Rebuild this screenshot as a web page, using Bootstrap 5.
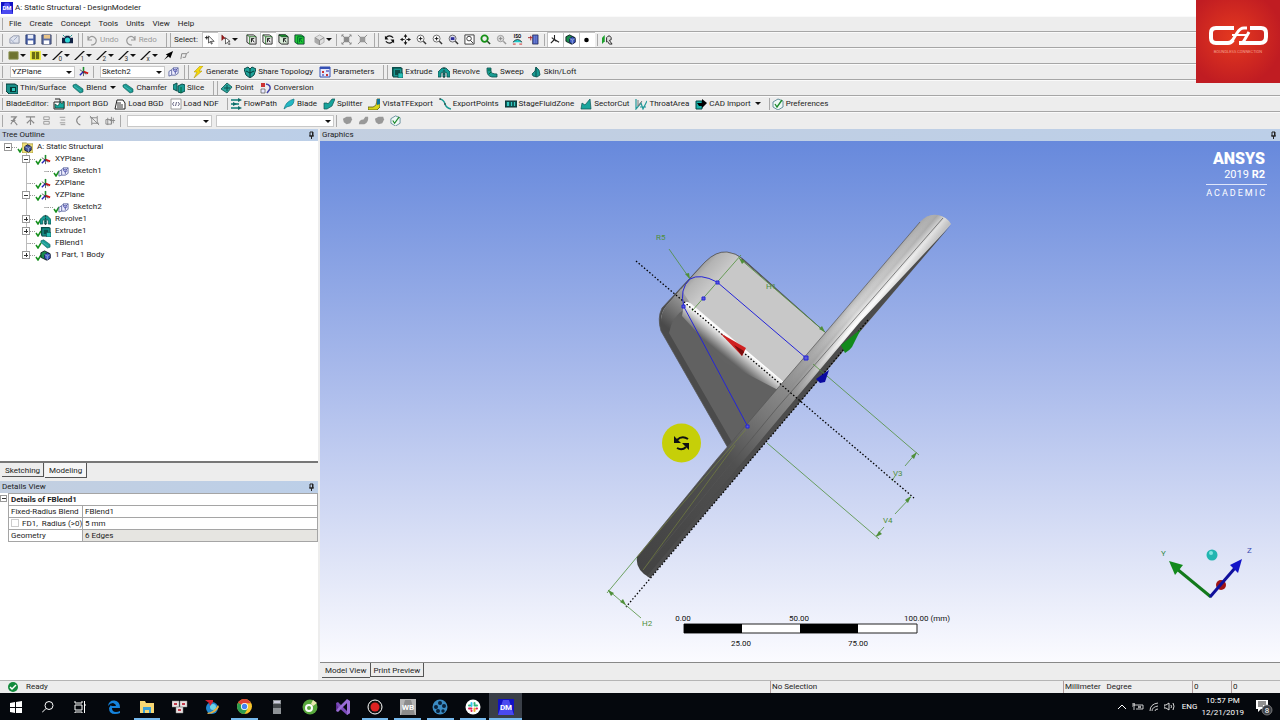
<!DOCTYPE html>
<html lang="en">
<head>
<meta charset="utf-8">
<meta name="viewport" content="width=device-width, initial-scale=1">
<title>A: Static Structural - DesignModeler</title>
<link href="https://cdn.jsdelivr.net/npm/bootstrap@5.3.0/dist/css/bootstrap.min.css" rel="stylesheet">
<style>
body{font:8px/12px Roboto,"Noto Sans",sans-serif;color:#1c1c1c;background:#ededed;overflow:hidden}
button{border:0;background:none;padding:0;color:inherit;font:inherit}
svg{display:block;flex:none}
.ic{width:12px;height:12px}
.titlebar{height:16px;background:#fff;padding-left:1px;gap:2px}
.menubar,.tools{height:16px;border-bottom:1px solid #a6a6a6;box-shadow:inset 0 1px #fafafa;white-space:nowrap}
.tools:last-child{border-bottom:0;height:17px}
.menubar a{color:inherit;text-decoration:none;margin-right:8px}
.menubar .items{padding-left:3px}
.grip{width:6px;height:12px;flex:none;border-left:2px solid transparent;box-shadow:inset 1px 0 #a9a9a9}
.split{width:11px;height:14px;flex:none;background:linear-gradient(#aaa,#aaa) 3px 0/1px 100% no-repeat,linear-gradient(#aaa,#aaa) 7px 0/1px 100% no-repeat}
.rule{width:5px;height:12px;flex:none;background:linear-gradient(#aaa,#aaa) 2px 0/1px 100% no-repeat}
.ib{width:16px;height:15px;flex:none;display:flex;align-items:center;justify-content:center}
.ib.on{background:#fff;box-shadow:inset 1px 1px #c4c4c4}
.ib.dd{width:22px;gap:1px}
.ib .ic{width:11px;height:11px}
.dd::after,.tb.dd::after{content:"";border:3px solid transparent;border-top:3px solid #111;border-bottom:0}
.tb{height:15px;display:flex;align-items:center;flex:none;margin-right:6px}
.tb .ic{margin-right:2px}
.tb.dd::after{margin-left:4px}
.off{color:#9a9a9a}
.combo{appearance:none;border:1px solid #c8c8c8;border-radius:0;height:12px;padding:0 0 0 1px;font:inherit;line-height:10px;color:inherit;background:#fff;outline:0}
.pick{position:relative;flex:none;display:flex}
.pick::after{content:"";position:absolute;right:3px;top:5px;border:3px solid transparent;border-top:3px solid #111;border-bottom:0;pointer-events:none}
.w-s{width:65px}.w-m{width:85px}.w-l{width:118px}
.brandbox{position:absolute;right:0;top:0;width:84px;height:83px;background:radial-gradient(circle at 45% 45%,#e5391f,#c01c22 75%);z-index:5}
.panehead{height:12px;background:linear-gradient(90deg,#c3cfe0,#bccfe8);padding:0 3px 0 2px;flex:none}
.leftpane{padding-right:2px}
.tree{flex:1 1 0;min-height:0;background:#fff;border-bottom:2px solid #777;position:relative;list-style:none;margin:0;padding:0}
.tree ul{list-style:none;margin:0;padding:0 0 0 18px}
.tree .twig{display:flex;align-items:center;height:12px;padding-left:4px;position:relative}
.twig .bx,.gut .bx{width:8px;height:8px;flex:none;border:1px solid #999;background:linear-gradient(#333,#333) 1px 50%/4px 1px no-repeat #fff}
.twig .plus{background:linear-gradient(#333,#333) 1px 50%/4px 1px no-repeat,linear-gradient(#333,#333) 50% 1px/1px 4px no-repeat #fff}
.twig .no{width:8px;height:8px;flex:none;background:linear-gradient(90deg,#bbb,#bbb) 4px 4px/4px 1px no-repeat}
.twig .dash{width:5px;border-top:1px dotted #999;flex:none}
.twig .ck{width:7px;height:8px;margin-top:4px}
.twig .ic{width:11px;height:11px;margin:0 2px 0 -2px}
.trunk{background:linear-gradient(#bbb,#bbb) 26px 0/1px calc(100% - 6px) no-repeat}
.tabs{height:18px;flex:none;gap:1px;padding-left:2px}
.tabs button{height:14px;padding:2px 3px 0;border:1px solid #555;border-width:0 1px 1px 0}
.tabs button.cur{height:15px;padding:2px 4px 0;background:#f6f6f6}
.details{background:#fff;flex:0 0 187px}
.gut{width:8px;flex:none;padding-top:2px}
.gut .bx{width:7px;height:7px}
.grid-t{width:100%;border-collapse:collapse;table-layout:fixed;border:1px solid #a5a5a5}
.grid-t td,.grid-t th{height:12px;line-height:11px;padding:0 2px;border:1px solid #a5a5a5;white-space:nowrap}
.grid-t col:first-child{width:74px}
.grid-t .ro{background:#e6e5e1}
.grid-t input{appearance:none;width:8px;height:8px;border:1px solid #ccc;margin:0 3px 0 0;vertical-align:-1px}
.workarea,.view3d{min-height:0}
.view3d{flex:1 1 0;background:linear-gradient(#6789dc,#a9baeb 45%,#dbe1f6 78%,#fbfbff)}
.logo3d{position:absolute;right:15px;top:8px;color:#fff;text-align:right}
.logo3d .big{font-weight:900;font-size:16px;line-height:20px;display:block}
.logo3d .yr{font-size:11px;line-height:11px;display:block}
.logo3d .yr b{font-weight:700}
.logo3d .ac{font-size:9px;line-height:14px;letter-spacing:2px;margin-right:-2px;border-top:1px solid #dfe6fa;margin-top:4px;padding-top:1px;display:block}
.triad{position:absolute;right:20px;bottom:60px}
.viewtabs{height:18px;flex:none;border-top:1px solid #888;padding-left:2px}
.viewtabs button{height:14px;padding:2px 3px 0;border:1px solid #555;border-width:0 1px 1px 1px}
.viewtabs button.cur{height:15px;padding-top:2px;border-left:0;border-right:0}
.statusbar{height:13px;flex:none;border-top:1px solid #b5b5b5}
.statusbar .cell{border-left:1px solid #b09a9a;padding-left:1px;line-height:11px;margin-right:1px}
.c1{flex:1 1 0}.c2{flex:0 0 292px}.c3{flex:0 0 128px}.c4{flex:0 0 38px}.c5{flex:0 0 48px}
.taskbar{height:27px;flex:none;background:#05080d;color:#fff}
.taskbar button{height:27px;display:flex;align-items:center;justify-content:center;position:relative}
.sysb{width:32px}
.apps{width:424px;margin-left:2px}
.apps button{flex:1 1 0}
.apps .run::after{content:"";position:absolute;left:3px;right:3px;bottom:0;height:2px;background:#76b9ed}
.apps .live{background:#3a3f48}
.apps .live::after{left:0;right:0}
.tray{width:16px}
</style>
</head>
<body class="d-flex flex-column vh-100">
<svg width="0" height="0" class="position-absolute" aria-hidden="true"><defs>
<symbol id="dm" viewBox="0 0 16 16"><path fill="#1111c4" d="M0 0h16v16H0z"/><path fill="#4a4af0" d="M0 16 5 1h6l5 15z"/><text x="8" y="11" font-size="8" font-weight="700" fill="#fff" text-anchor="middle">DM</text></symbol>
<symbol id="new" viewBox="0 0 12 12"><path d="M1 10V5l4-3h6v8z" fill="#dfe3ee" stroke="#8d95a8"/><path d="m5 7 4-4M2 6l4 4" stroke="#9aa7c4"/></symbol>
<symbol id="save" viewBox="0 0 12 12"><path d="M1 1h10v10H1z" fill="#4860a8" stroke="#2c3c70"/><path d="M3 1h6v4H3z" fill="#e8ecf6"/><path d="M3 7h6v4H3z" fill="#fff"/></symbol>
<symbol id="saveas" viewBox="0 0 12 12"><path d="M1 1h10v10H1z" fill="#5a6ba0" stroke="#3b4468"/><path d="M3 1h7v4H3z" fill="#e8c48a"/><path d="M3 7h6v4H3z" fill="#fff"/></symbol>
<symbol id="cam" viewBox="0 0 12 12"><path d="M0 4h3l1-2h4l1 2h3v6H0z" fill="#124" /><circle cx="6" cy="6.500" r="2.800" fill="#2fd6d6"/><path d="m1 1 2 2M11 1 9 3" stroke="#188"/></symbol>
<symbol id="undo" viewBox="0 0 12 12"><path d="M2 2v4h4M2 6q2-5 6-3 3 2 2 5t-5 3" fill="none" stroke="#9a9a9a" stroke-width="1.200"/></symbol>
<symbol id="redo" viewBox="0 0 12 12"><path d="M10 2v4H6M10 6Q8 1 4 3 1 5 2 8t5 3" fill="none" stroke="#9a9a9a" stroke-width="1.200"/></symbol>
<symbol id="cur" viewBox="0 0 12 12"><path d="M5 2v8l2-2 1 3 1-.5L8 8h3z" fill="#fff" stroke="#222" stroke-width=".8"/><path d="M1 4h4M3 2v4" stroke="#111"/></symbol>
<symbol id="cur2" viewBox="0 0 12 12"><path d="M2 1v6l2-2h2z" fill="#a31818" stroke="#611" stroke-width=".6"/><path d="M6 4v7l2-2 2 3 1-1-2-3h2z" fill="#fff" stroke="#333" stroke-width=".8"/></symbol>
<symbol id="bx" viewBox="0 0 12 12"><path d="M1 1h7l3 2v8H4L1 9z" fill="#eee" stroke="#222"/><path d="M1 1l3 2h7M4 3v8" fill="none" stroke="#2c7a2c"/><path d="m6 5 3 4M6 5v4M6 5h3" stroke="#111"/></symbol>
<symbol id="bxg" viewBox="0 0 12 12"><path d="M1 1h7l3 2v8H4L1 9z" fill="#d7ead7" stroke="#222"/><path d="M1 1h7l3 2H4z" fill="#19b82b" stroke="#142"/><path d="m6 5 3 4M6 5v4M6 5h3" stroke="#111"/></symbol>
<symbol id="bxf" viewBox="0 0 12 12"><path d="M1 1h7l3 2v8H4L1 9z" fill="#1dcb32" stroke="#143"/><path d="M4 3h7M4 3v8M6 5l3 4M6 5v4M6 5h3" stroke="#063" fill="none"/></symbol>
<symbol id="gcube" viewBox="0 0 12 12"><path d="m1 4 5-3 5 3v5l-5 3-5-3z" fill="#e0e0e0" stroke="#999" stroke-width=".7"/><path d="m1 4 5 3v5l-5-3z" fill="#aaa"/><path d="m1 4 5 3 5-3M6 7v5" fill="none" stroke="#888"/></symbol>
<symbol id="ext" viewBox="0 0 12 12"><path d="M3 3h6v6H3z" fill="#8d8d8d"/><path d="M1 3V1h2M9 1h2v2M11 9v2H9M3 11H1V9M1 1l10 10M11 1 1 11" fill="none" stroke="#888"/></symbol>
<symbol id="shr" viewBox="0 0 12 12"><path d="M3 3h6v6H3z" fill="#9a9a9a"/><path d="m1 1 3 3M11 1 8 4M1 11l3-3M11 11 8 8" stroke="#888"/></symbol>
<symbol id="rot" viewBox="0 0 12 12"><path d="M2 5q1-3 4-3 2 0 4 2M10 7q-1 3-4 3-2 0-4-2" fill="none" stroke="#111" stroke-width="1.300"/><path d="M1 2v4h4zM11 10V6H7z" fill="#111"/></symbol>
<symbol id="pan" viewBox="0 0 12 12"><path d="M6 2v8M2 6h8" stroke="#111" stroke-dasharray="3 2"/><path d="m6 0 2 3H4zM6 12l2-3H4zM0 6l3-2v4zM12 6 9 4v4z" fill="#111"/></symbol>
<symbol id="mag" viewBox="0 0 12 12"><circle cx="5" cy="5" r="3.800" fill="#fff" stroke="#555" stroke-width=".9"/><path d="m8 8 3 3" stroke="#333" stroke-width="1.500"/><path d="M5 3v4M3 5h4" stroke="#111"/></symbol>
<symbol id="magb" viewBox="0 0 12 12"><circle cx="5" cy="5" r="3.800" fill="#dde" stroke="#555" stroke-width=".9"/><path d="m8 8 3 3" stroke="#333" stroke-width="1.500"/><path fill="#2a2a98" d="M3 3.500h4v3H3z"/></symbol>
<symbol id="magx" viewBox="0 0 12 12"><path d="M1 1h10v10H1z" fill="#fff" stroke="#333"/><circle cx="5.500" cy="5" r="2.500" fill="none" stroke="#333"/><path d="m7 7 3 3" stroke="#333"/></symbol>
<symbol id="magg" viewBox="0 0 12 12"><circle cx="5" cy="5" r="3.500" fill="#eee" stroke="#159015" stroke-width="2"/><path d="m8 8 3 3" stroke="#242" stroke-width="1.600"/></symbol>
<symbol id="mago" viewBox="0 0 12 12"><circle cx="5" cy="5" r="3.500" fill="#ddd" stroke="#999"/><path d="m8 8 3 3" stroke="#999" stroke-width="1.500"/><path d="M5 3v4M3 5h4" stroke="#888"/></symbol>
<symbol id="iso" viewBox="0 0 12 12"><text x="6" y="4.500" font-size="5" font-weight="700" text-anchor="middle">ISO</text><path d="M1 9q5-6 10 0" fill="#2cc" stroke="#233"/><path d="M1 11h3M8 11h3" stroke="#c22"/></symbol>
<symbol id="look" viewBox="0 0 12 12"><path d="M5 1h6v10H5z" fill="#4a5fc0" stroke="#224" stroke-width=".7"/><path d="M0 4h5M3 2v5" stroke="#a22"/><path d="M7 2v8M9 2v8" stroke="#8a9ae0" stroke-width=".6"/></symbol>
<symbol id="ax" viewBox="0 0 12 12"><path d="M6 1v5l5 3M6 6l-4 4M3 4l5 4" fill="none" stroke="#222" stroke-width="1.200"/></symbol>
<symbol id="cube" viewBox="0 0 12 12"><path d="m1 3 4-2 6 3v5l-4 2-6-3z" fill="#168a4c" stroke="#122"/><path d="m5 5 3-2 3 2v4l-3 2-3-2z" fill="#4460c8" stroke="#114" stroke-width=".8"/><path d="m5 5 3 1.500L11 5M8 6.500V11" fill="none" stroke="#bcd" stroke-width=".6"/></symbol>
<symbol id="dot" viewBox="0 0 12 12"><circle cx="6" cy="6.500" r="2.500" fill="#000"/></symbol>
<symbol id="disp" viewBox="0 0 12 12"><path d="M0 4l3-3v7l-3 3z" fill="#1ca02c"/><path d="M5 9V4q3-4 5 0 1 3-2 3l3 4H8L6 8" fill="#ddd" stroke="#222"/></symbol>
<symbol id="e0" viewBox="0 0 12 12"><path d="M0 11h2L12 1h-2z" fill="#111"/><text x="7" y="12" font-size="7" fill="#333">0</text></symbol>
<symbol id="e1" viewBox="0 0 12 12"><path d="M0 11h2L12 1h-2z" fill="#111"/><text x="7" y="12" font-size="7" fill="#333">1</text></symbol>
<symbol id="e2" viewBox="0 0 12 12"><path d="M0 11h2L12 1h-2z" fill="#111"/><text x="7" y="12" font-size="7" fill="#333">2</text></symbol>
<symbol id="e3" viewBox="0 0 12 12"><path d="M0 11h2L12 1h-2z" fill="#111"/><text x="7" y="12" font-size="7" fill="#333">3</text></symbol>
<symbol id="e4" viewBox="0 0 12 12"><path d="M0 11h2L12 1h-2z" fill="#111"/><text x="7" y="12" font-size="7" fill="#333">x</text></symbol>
<symbol id="olive" viewBox="0 0 12 12"><path d="M1 2h10v8H1z" fill="#6e7330" stroke="#8a9050"/></symbol>
<symbol id="yel" viewBox="0 0 12 12"><path d="M0 1h12v10H0z" fill="#f0ee4a"/><path d="M2 2h8v8H2z" fill="#6b6b14"/><path d="M6 2v8" stroke="#d8d830"/></symbol>
<symbol id="arr" viewBox="0 0 12 12"><path d="m1 11 4-5-2-1 8-4-3 8-2-2z" fill="#000"/></symbol>
<symbol id="leaf" viewBox="0 0 12 12"><path d="M2 10 3 4h5L7 8H4M8 4l3-2" fill="none" stroke="#777" stroke-width=".9"/></symbol>
<symbol id="pln" viewBox="0 0 12 12"><path d="M6 6V1" stroke="#1c8c2c" stroke-width="1.700"/><path d="m6 6 5 2" stroke="#c11" stroke-width="2"/><path d="M6 6 2 10" stroke="#22b" stroke-width="1.500"/><path d="m2 4 7 5M6 6v5" stroke="#333" stroke-width=".8"/></symbol>
<symbol id="skt" viewBox="0 0 12 12"><path d="M1 6 4 4v6L1 11zM4 4l2-2h5v6l-3 2H4M6 2v3M11 2 8 5v4" fill="#eef" stroke="#55609c" stroke-width=".9"/><circle cx="8" cy="5" r="1.500" fill="none" stroke="#33a" stroke-width=".8"/></symbol>
<symbol id="bolt" viewBox="0 0 12 12"><path d="m8 0-6 6h3l-3 6 8-7H7l4-5z" fill="#f5d90a" stroke="#a88c00" stroke-width=".5"/></symbol>
<symbol id="share" viewBox="0 0 12 12"><path d="m0 3 4-2 2 2 2-2 4 2-2 6-4 3-4-3z" fill="#1fa39a" stroke="#0b4a48"/><path d="M6 3v8M2 5l4 2 4-2" stroke="#063d3b" fill="none"/></symbol>
<symbol id="par" viewBox="0 0 12 12"><path d="M1 1h10v10H1z" fill="#e5e9fb" stroke="#3550b4"/><path d="M1 1h10v2H1z" fill="#3550b4"/><path d="M3 5h2v2H3zM7 8h2v2H7z" fill="#c33"/><path d="M7 5h3M3 9h2" stroke="#22a"/></symbol>
<symbol id="extr" viewBox="0 0 12 12"><path d="M1 1h9v2H3v7H1z" fill="#0b5c58"/><path d="M2 2h9v9H2z" fill="#17968f" stroke="#0b3e3c"/><path d="M4 4h5v5H4z" fill="#0c4f4a"/><path d="M7 7h5v5H7z" fill="#29c0b6" stroke="#0b3e3c" stroke-width=".6"/></symbol>
<symbol id="rev" viewBox="0 0 12 12"><path d="M0 11V6l4-4h4l4 4v5H9V7L7 6v5H5V6L3 7v4z" fill="#159b94" stroke="#0a4f4b" stroke-width=".8"/><path d="M6 1v11" stroke="#222" stroke-dasharray="2 1" stroke-width=".8"/></symbol>
<symbol id="swp" viewBox="0 0 12 12"><path d="M1 2h4v3q0 3 6 3v3H6Q1 10 1 5z" fill="#1a9c93" stroke="#0a4f4b" stroke-width=".8"/><path d="M2 4h3M3 8l2-2" stroke="#063"/></symbol>
<symbol id="loft" viewBox="0 0 12 12"><path d="M6 1 9 4l1 5-3 2-4-1-1-2 3-3z" fill="#189a92" stroke="#0a4f4b" stroke-width=".8"/><path d="M6 1v10" stroke="#0a4f4b"/></symbol>
<symbol id="thin" viewBox="0 0 12 12"><path d="M0 2h9l3 2v8H3L0 9z" fill="#1a8e88" stroke="#063b38"/><path d="M4 5h6v5H4z" fill="#063b38"/><path d="M6 6h3v3H6z" fill="#2fc9bf"/></symbol>
<symbol id="bln" viewBox="0 0 12 12"><path d="m1 3 3-1 7 5v3l-3 1-7-6z" fill="#1b9b94" stroke="#0b5552" stroke-width=".6"/><path d="m2 4 7 5" stroke="#3fb8b0"/></symbol>
<symbol id="sli" viewBox="0 0 12 12"><path d="m0 3 4-2v8l-4-2zM5 4l4-2 3 1v6l-4 2-3-1z" fill="#1b9b94" stroke="#0a4f4b"/><path d="M8 5v6" stroke="#063"/></symbol>
<symbol id="pt" viewBox="0 0 12 12"><path d="m0 7 6-6 5 4-5 6z" fill="#2ba89f" stroke="#0a4f4b" stroke-width=".8"/><path d="M6 3v6M3 6h6" stroke="#0a4f4b"/></symbol>
<symbol id="conv" viewBox="0 0 12 12"><path d="M1 1h4v4H1z" fill="#c33"/><path d="M6 2q5 1 4 5l-3 4" fill="none" stroke="#44a" stroke-width="1.500"/><path d="M1 7h4v4H1z" fill="#e8e8ff" stroke="#555" stroke-width=".7"/></symbol>
<symbol id="imp" viewBox="0 0 12 12"><path d="M1 4h10v7H1z" fill="#fff" stroke="#222"/><path d="M2 10V6l3 2 2-4 2 2 2-3v7z" fill="#16a9a0" stroke="#032" stroke-width=".6"/><path d="M2 1h5v3" stroke="#222" fill="none"/></symbol>
<symbol id="load" viewBox="0 0 12 12"><path d="M1 11 3 2h6l2 3v6z" fill="#fff" stroke="#222"/><path d="M3 7h6M3 5h4M3 9h6" stroke="#333"/></symbol>
<symbol id="ndf" viewBox="0 0 12 12"><path d="M1 1h10v10H1z" fill="#fff" stroke="#888" stroke-width=".8"/><path d="M4 4 2.500 6 4 8M8 4l1.500 2L8 8M6.500 4l-1 4" fill="none" stroke="#446" stroke-width=".8"/></symbol>
<symbol id="flow" viewBox="0 0 12 12"><path d="M1 2h8M1 6h8M1 10h8" stroke="#0b7c77" stroke-width="1.500"/><path d="m8 0 4 2-4 2zM3 4l4 2-4 2zM8 8l4 2-4 2z" fill="#0d6b67"/></symbol>
<symbol id="blade" viewBox="0 0 12 12"><path d="M1 11Q3 3 11 1q0 6-4 7-3 0-6 3z" fill="#22b8c4" stroke="#16808a" stroke-width=".8"/></symbol>
<symbol id="spl" viewBox="0 0 12 12"><path d="M1 5h3l1 1 4-5h3L9 8l-5 3H1z" fill="#17a39b" stroke="#0b5552" stroke-width=".7"/></symbol>
<symbol id="vis" viewBox="0 0 12 12"><path d="M0 9h5q4-1 4-8h3v8l-3 3H0z" fill="#d9d51a" stroke="#565610" stroke-width=".8"/><path d="M9 1v6l3-1V1z" fill="#179"/></symbol>
<symbol id="exp" viewBox="0 0 12 12"><path d="M1 1q4 1 5 5t6 5" fill="none" stroke="#189a92" stroke-width="1.400"/><path d="M0 1h2M5 6h2" stroke="#333"/></symbol>
<symbol id="stg" viewBox="0 0 12 12"><path d="M0 3h12v6H0z" fill="#125d5a" stroke="#072f2e"/><path d="M2 4h2v4H2zM6 4h1v4H6zM9 4h1v4H9z" fill="#35c9c0"/></symbol>
<symbol id="sec" viewBox="0 0 12 12"><path d="M1 11 2 5l3 2 5-6 1 10z" fill="#19a59c" stroke="#0b5552" stroke-width=".7"/></symbol>
<symbol id="thr" viewBox="0 0 12 12"><path d="M1 1v10L6 5l2 6 4-8M5 9h6" fill="none" stroke="#299" stroke-width="1.200"/><path d="M3 2v6l4-5" stroke="#777" fill="none"/></symbol>
<symbol id="cad" viewBox="0 0 12 12"><path d="M1 3h6v8H1z" fill="#19b3a9" stroke="#044"/><path d="M2 5h5V1l5 4-5 5V8H4z" fill="#000"/></symbol>
<symbol id="pref" viewBox="0 0 12 12"><path d="m1 4 5-3 5 2v6l-5 3-5-3z" fill="#eef8f6" stroke="#478" stroke-width=".8"/><path d="m3 6 2 3 5-7" fill="none" stroke="#1d8a2c" stroke-width="1.300"/></symbol>
<symbol id="ga" viewBox="0 0 12 12"><path d="M2 2h6L5 6l4 5M2 10l4-7M2 6h5" fill="none" stroke="#8a8a8a" stroke-width="1.200"/></symbol>
<symbol id="gb" viewBox="0 0 12 12"><path d="M1 2h10M6 2v9M6 5l-4 4M6 5l4 4" fill="none" stroke="#8a8a8a" stroke-width="1.200"/></symbol>
<symbol id="gc" viewBox="0 0 12 12"><path d="M3 2h6v3H3zM3 7h6v3H3z" fill="none" stroke="#999"/></symbol>
<symbol id="gh" viewBox="0 0 12 12"><path d="M3 2.500h6M4 5.500h5M3 8.500h6M4 10.500h5" fill="none" stroke="#999"/></symbol>
<symbol id="gd" viewBox="0 0 12 12"><path d="M8 1Q4 3 4 6t4 5" fill="none" stroke="#888" stroke-width="1.200"/></symbol>
<symbol id="ge" viewBox="0 0 12 12"><path d="M3 3h6v6H3zM1 1l10 10M1 3h2M9 1v2M11 9H9M3 9v2" fill="none" stroke="#888"/></symbol>
<symbol id="gi" viewBox="0 0 12 12"><path d="M1 5h6v5H1zM7 2v8M5 6h6M9 3v6M3 3v8" fill="none" stroke="#888"/></symbol>
<symbol id="gf" viewBox="0 0 12 12"><path d="m1 4 4-2h5l1 3-2 4-4 1-3-2z" fill="#989898"/></symbol>
<symbol id="gg" viewBox="0 0 12 12"><path d="M1 10q0-5 5-5l2-3h3q1 6-4 8z" fill="#999"/></symbol>
<symbol id="ck" viewBox="0 0 7 8"><path d="m1 4 2 3 3-5" fill="none" stroke="#16901e" stroke-width="1.500"/></symbol>
<symbol id="ast" viewBox="0 0 12 12"><path d="M0 1h5l1 1h6v10H0z" fill="#f1e27a" stroke="#8e8130" stroke-width=".7"/><path d="m3 5 3-2 4 2v4l-3 2-4-2z" fill="#44569e" stroke="#113"/><path d="m3 5 4 2 3-2M7 7v4" stroke="#cde" stroke-width=".6" fill="none"/></symbol>
<symbol id="pin" viewBox="0 0 8 8"><path d="M3 1h3v4H3zM2 5h5M4.500 5v3" fill="none" stroke="#222"/><path d="M5 1h1v4H5z" fill="#222"/></symbol>
</defs></svg>

<header class="position-relative flex-shrink-0">
<div class="brandbox"><svg viewBox="0 0 84 83" width="84" height="83"><g fill="none" stroke="#fff" stroke-width="4" stroke-linejoin="round"><path d="M38 28H20q-5 0-5 5v5q0 5 5 5h12q3 0 5-3"/><path d="M54 28h11q5 0 5 5v4q0 6-6 6H43"/><path d="M36 41l5-8q3-5 7-5h3M45 43q3-1 4-4l4-7" stroke-width="3"/><path d="M36 35h14" stroke-width="2"/></g><text x="42" y="53" font-size="4" fill="#f3a091" text-anchor="middle">BOUNDLESS CONNECTION</text></svg></div>
<div class="titlebar d-flex align-items-center"><svg class="ic"><use href="#dm"/></svg><span>A: Static Structural - DesignModeler</span></div>
<nav class="menubar d-flex align-items-center"><span class="grip"></span><span class="items d-flex"><a href="#">File</a><a href="#">Create</a><a href="#">Concept</a><a href="#">Tools</a><a href="#">Units</a><a href="#">View</a><a href="#">Help</a></span></nav>

<div class="tools d-flex align-items-center"><span class="grip"></span>
<button class="ib" aria-label="New"><svg class="ic"><use href="#new"/></svg></button><button class="ib" aria-label="Save"><svg class="ic"><use href="#save"/></svg></button><button class="ib" aria-label="Save as"><svg class="ic"><use href="#saveas"/></svg></button><span class="rule"></span><button class="ib" aria-label="Image capture"><svg class="ic"><use href="#cam"/></svg></button><span class="split"></span>
<button class="tb off"><svg class="ic"><use href="#undo"/></svg>Undo</button><button class="tb off"><svg class="ic"><use href="#redo"/></svg>Redo</button><span class="split"></span><span class="pe-1">Select:</span>
<button class="ib on" aria-label="New selection"><svg class="ic"><use href="#cur"/></svg></button><button class="ib dd me-1" aria-label="Select mode"><svg class="ic"><use href="#cur2"/></svg></button><button class="ib" aria-label="Points"><svg class="ic"><use href="#bx"/></svg></button><button class="ib on" aria-label="Edges"><svg class="ic"><use href="#bx"/></svg></button><button class="ib" aria-label="Faces"><svg class="ic"><use href="#bxg"/></svg></button><button class="ib me-1" aria-label="Bodies"><svg class="ic"><use href="#bxf"/></svg></button><button class="ib dd off" aria-label="Extend"><svg class="ic"><use href="#gcube"/></svg></button><span class="rule"></span><button class="ib" aria-label="Expand"><svg class="ic"><use href="#ext"/></svg></button><button class="ib" aria-label="Shrink"><svg class="ic"><use href="#shr"/></svg></button><span class="split"></span>
<button class="ib" aria-label="Rotate"><svg class="ic"><use href="#rot"/></svg></button><button class="ib" aria-label="Pan"><svg class="ic"><use href="#pan"/></svg></button><button class="ib" aria-label="Zoom"><svg class="ic"><use href="#mag"/></svg></button><button class="ib" aria-label="Box zoom"><svg class="ic"><use href="#mag"/></svg></button><button class="ib" aria-label="Fit"><svg class="ic"><use href="#magb"/></svg></button><button class="ib" aria-label="Magnifier"><svg class="ic"><use href="#magx"/></svg></button><button class="ib" aria-label="Previous view"><svg class="ic"><use href="#magg"/></svg></button><button class="ib" aria-label="Next view"><svg class="ic"><use href="#mago"/></svg></button><button class="ib" aria-label="ISO view"><svg class="ic"><use href="#iso"/></svg></button><button class="ib" aria-label="Look at"><svg class="ic"><use href="#look"/></svg></button><span class="rule"></span><button class="ib on" aria-label="Display plane"><svg class="ic"><use href="#ax"/></svg></button><button class="ib on" aria-label="Display model"><svg class="ic"><use href="#cube"/></svg></button><button class="ib on" aria-label="Display points"><svg class="ic"><use href="#dot"/></svg></button><span class="rule"></span><button class="ib" aria-label="Look at face"><svg class="ic"><use href="#disp"/></svg></button></div>

<div class="tools d-flex align-items-center"><span class="grip"></span>
<button class="ib dd" aria-label="Face color"><svg class="ic"><use href="#olive"/></svg></button><button class="ib dd" aria-label="Edge color"><svg class="ic"><use href="#yel"/></svg></button><button class="ib dd" aria-label="Free edges"><svg class="ic"><use href="#e0"/></svg></button><button class="ib dd" aria-label="Single edges"><svg class="ic"><use href="#e1"/></svg></button><button class="ib dd" aria-label="Double edges"><svg class="ic"><use href="#e2"/></svg></button><button class="ib dd" aria-label="Triple edges"><svg class="ic"><use href="#e3"/></svg></button><button class="ib dd" aria-label="Multiple edges"><svg class="ic"><use href="#e4"/></svg></button><button class="ib" aria-label="Edge direction"><svg class="ic"><use href="#arr"/></svg></button><button class="ib" aria-label="Vertices"><svg class="ic"><use href="#leaf"/></svg></button></div>

<div class="tools d-flex align-items-center"><span class="grip me-1"></span>
<span class="pick"><select class="combo w-s" aria-label="Plane"><option>YZPlane</option></select></span><button class="ib" aria-label="New plane"><svg class="ic"><use href="#pln"/></svg></button><span class="rule me-1"></span><span class="pick"><select class="combo w-s" aria-label="Sketch"><option>Sketch2</option></select></span><button class="ib" aria-label="New sketch"><svg class="ic"><use href="#skt"/></svg></button><span class="split"></span>
<button class="tb"><svg class="ic"><use href="#bolt"/></svg>Generate</button><button class="tb"><svg class="ic"><use href="#share"/></svg>Share Topology</button><button class="tb"><svg class="ic"><use href="#par"/></svg>Parameters</button><span class="split"></span><button class="tb"><svg class="ic"><use href="#extr"/></svg>Extrude</button><button class="tb"><svg class="ic"><use href="#rev"/></svg>Revolve</button><button class="tb"><svg class="ic"><use href="#swp"/></svg>Sweep</button><button class="tb"><svg class="ic"><use href="#loft"/></svg>Skin/Loft</button></div>

<div class="tools d-flex align-items-center"><span class="grip"></span>
<button class="tb"><svg class="ic"><use href="#thin"/></svg>Thin/Surface</button><button class="tb dd"><svg class="ic"><use href="#bln"/></svg>Blend</button><button class="tb"><svg class="ic"><use href="#bln"/></svg>Chamfer</button><button class="tb"><svg class="ic"><use href="#sli"/></svg>Slice</button><span class="split"></span><button class="tb"><svg class="ic"><use href="#pt"/></svg>Point</button><button class="tb"><svg class="ic"><use href="#conv"/></svg>Conversion</button></div>

<div class="tools d-flex align-items-center"><span class="grip"></span><span class="pe-1">BladeEditor:</span>
<button class="tb"><svg class="ic"><use href="#imp"/></svg>Import BGD</button><button class="tb"><svg class="ic"><use href="#load"/></svg>Load BGD</button><button class="tb"><svg class="ic"><use href="#ndf"/></svg>Load NDF</button><span class="rule"></span><button class="tb"><svg class="ic"><use href="#flow"/></svg>FlowPath</button><button class="tb"><svg class="ic"><use href="#blade"/></svg>Blade</button><button class="tb"><svg class="ic"><use href="#spl"/></svg>Splitter</button><button class="tb"><svg class="ic"><use href="#vis"/></svg>VistaTFExport</button><button class="tb"><svg class="ic"><use href="#exp"/></svg>ExportPoints</button><button class="tb"><svg class="ic"><use href="#stg"/></svg>StageFluidZone</button><button class="tb"><svg class="ic"><use href="#sec"/></svg>SectorCut</button><button class="tb"><svg class="ic"><use href="#thr"/></svg>ThroatArea</button><button class="tb dd"><svg class="ic"><use href="#cad"/></svg>CAD Import</button><span class="rule"></span><button class="tb"><svg class="ic"><use href="#pref"/></svg>Preferences</button></div>

<div class="tools d-flex align-items-center"><span class="grip"></span>
<button class="ib" aria-label="Tool A"><svg class="ic"><use href="#ga"/></svg></button><button class="ib" aria-label="Tool B"><svg class="ic"><use href="#gb"/></svg></button><button class="ib" aria-label="Tool C"><svg class="ic"><use href="#gc"/></svg></button><button class="ib" aria-label="Tool D"><svg class="ic"><use href="#gh"/></svg></button><button class="ib" aria-label="Tool E"><svg class="ic"><use href="#gd"/></svg></button><button class="ib" aria-label="Tool F"><svg class="ic"><use href="#ge"/></svg></button><button class="ib" aria-label="Tool G"><svg class="ic"><use href="#gi"/></svg></button><span class="rule me-1"></span><span class="pick me-1"><select class="combo w-m" aria-label="Blade"><option></option></select></span><span class="pick"><select class="combo w-l" aria-label="Layer"><option></option></select></span><span class="rule"></span><button class="ib" aria-label="Body"><svg class="ic"><use href="#gf"/></svg></button><button class="ib" aria-label="Surface"><svg class="ic"><use href="#gg"/></svg></button><button class="ib" aria-label="Solid"><svg class="ic"><use href="#gf"/></svg></button><button class="ib" aria-label="Options"><svg class="ic"><use href="#pref"/></svg></button></div>
</header>

<main class="workarea row g-0 flex-grow-1">
<section class="col-3 leftpane d-flex flex-column h-100">
<div class="panehead d-flex justify-content-between align-items-center"><span>Tree Outline</span><svg width="8" height="8"><use href="#pin"/></svg></div>
<ul class="tree"><li><div class="twig"><span class="bx"></span><span class="dash"></span><svg class="ck"><use href="#ck"/></svg><svg class="ic"><use href="#ast"/></svg>&nbsp;A: Static Structural</div></li>
<li class="trunk"><ul>
<li><div class="twig"><span class="bx"></span><span class="dash"></span><svg class="ck"><use href="#ck"/></svg><svg class="ic"><use href="#pln"/></svg>&nbsp;XYPlane</div><ul><li><div class="twig"><span class="no"></span><span class="dash"></span><svg class="ck"><use href="#ck"/></svg><svg class="ic"><use href="#skt"/></svg>&nbsp;Sketch1</div></li></ul></li>
<li><div class="twig"><span class="no"></span><span class="dash"></span><svg class="ck"><use href="#ck"/></svg><svg class="ic"><use href="#pln"/></svg>&nbsp;ZXPlane</div></li>
<li><div class="twig"><span class="bx"></span><span class="dash"></span><svg class="ck"><use href="#ck"/></svg><svg class="ic"><use href="#pln"/></svg>&nbsp;YZPlane</div><ul><li><div class="twig"><span class="no"></span><span class="dash"></span><svg class="ck"><use href="#ck"/></svg><svg class="ic"><use href="#skt"/></svg>&nbsp;Sketch2</div></li></ul></li>
<li><div class="twig"><span class="bx plus"></span><span class="dash"></span><svg class="ck"><use href="#ck"/></svg><svg class="ic"><use href="#rev"/></svg>&nbsp;Revolve1</div></li>
<li><div class="twig"><span class="bx plus"></span><span class="dash"></span><svg class="ck"><use href="#ck"/></svg><svg class="ic"><use href="#extr"/></svg>&nbsp;Extrude1</div></li>
<li><div class="twig"><span class="no"></span><span class="dash"></span><svg class="ck"><use href="#ck"/></svg><svg class="ic"><use href="#bln"/></svg>&nbsp;FBlend1</div></li>
<li><div class="twig"><span class="bx plus"></span><span class="dash"></span><svg class="ck"><use href="#ck"/></svg><svg class="ic"><use href="#cube"/></svg>&nbsp;1 Part, 1 Body</div></li>
</ul></li></ul>
<div class="tabs d-flex"><button>Sketching</button><button class="cur">Modeling</button></div>
<div class="panehead d-flex justify-content-between align-items-center"><span>Details View</span><svg width="8" height="8"><use href="#pin"/></svg></div>
<div class="details d-flex"><div class="gut"><div class="bx"></div></div>
<div class="flex-grow-1"><table class="grid-t"><colgroup><col><col></colgroup><tbody><tr><th colspan="2">Details of FBlend1</th></tr><tr><td>Fixed-Radius Blend</td><td>FBlend1</td></tr><tr><td><label><input type="checkbox">FD1,&nbsp; Radius (&gt;0)</label></td><td>5 mm</td></tr><tr><td>Geometry</td><td class="ro">6 Edges</td></tr></tbody></table></div></div>
</section>

<section class="col-9 d-flex flex-column h-100">
<div class="panehead d-flex justify-content-between align-items-center"><span>Graphics</span><svg width="8" height="8"><use href="#pin"/></svg></div>
<div class="view3d position-relative">
<svg class="w-100 h-100" viewBox="320 141 960 521">
<defs>
<linearGradient id="disc" gradientUnits="userSpaceOnUse" x1="643" y1="568" x2="942" y2="218"><stop offset="0" stop-color="#434343"/><stop offset=".3" stop-color="#505050"/><stop offset=".42" stop-color="#777"/><stop offset=".56" stop-color="#9a9a9a"/><stop offset=".72" stop-color="#cfcfcf"/><stop offset="1" stop-color="#a8a8a8"/></linearGradient>
<linearGradient id="shine" gradientUnits="userSpaceOnUse" x1="866" y1="281" x2="886" y2="298"><stop offset="0" stop-color="#777" stop-opacity=".7"/><stop offset=".45" stop-color="#fff" stop-opacity="0"/><stop offset=".75" stop-color="#fff"/><stop offset="1" stop-color="#eee" stop-opacity=".6"/></linearGradient>
<linearGradient id="fadeup" gradientUnits="userSpaceOnUse" x1="790" y1="400" x2="942" y2="218"><stop offset="0" stop-color="#000"/><stop offset=".4" stop-color="#fff"/><stop offset="1" stop-color="#999"/></linearGradient>
<mask id="up"><path fill="url(#fadeup)" d="M600 200h400v400H600z"/></mask>
<linearGradient id="rnd" gradientUnits="userSpaceOnUse" x1="690" y1="262" x2="714" y2="284"><stop offset="0" stop-color="#777"/><stop offset=".5" stop-color="#b4b4b4"/><stop offset="1" stop-color="#c9c9c9"/></linearGradient>
<linearGradient id="hl" gradientUnits="userSpaceOnUse" x1="741" y1="335" x2="724" y2="356"><stop offset="0" stop-color="#c6c6c6"/><stop offset=".35" stop-color="#fff"/><stop offset="1" stop-color="#626262"/></linearGradient>
<linearGradient id="corner" gradientUnits="userSpaceOnUse" x1="664" y1="325" x2="688" y2="295"><stop offset="0" stop-color="#4a4a4a"/><stop offset="1" stop-color="#a5a5a5"/></linearGradient>
</defs>
<path d="M662 308 705 262Q716 251 727 252 736 253 743 259L826 333 784 386 728 448 661 331Q657 318 662 308Z" fill="#4b4b4b"/>
<path d="M661 320q0-8 6-15l38-43q11-11 22-10 9 1 15 7l-53 61-20 12z" fill="url(#rnd)"/>
<path d="M661 325q-1-12 6-20l14-16 9 14-6 8-15 22-5-2z" fill="url(#corner)"/>
<path d="M740 258 826 333 782 386 690 306Z" fill="#c8c8c8"/>
<path d="M669 333Q672 316 685 309L784 389 733 444Z" fill="#616161"/>
<path d="M684 303Q688 300 694 306L785 383 778 390 724 362 682 316Z" fill="url(#hl)"/>
<path d="M662 308 705 262Q716 251 727 252 736 253 743 259L826 333M728 448 661 331Q657 318 662 308" fill="none" stroke="#555" stroke-width=".8"/>
<path d="M920 222Q928 213 938 215 947 217 951 224L800 402 650 578Q635 570 637 557L717 459 826 332Z" fill="url(#disc)"/>
<path d="M920 222Q928 213 938 215 947 217 951 224L800 402 650 578Q635 570 637 557L717 459 826 332Z" fill="url(#shine)" mask="url(#up)"/>
<path d="M951 225 800 402 650 578 647 576 797 397 860 322Z" fill="#4c4c4c"/>
<path d="M943 218 777 408 643 570M920 222 826 332 717 459 637 557" fill="none" stroke="#555" stroke-width=".7"/>
<path d="M748 427 637 557M735 445 643 570" stroke="#7a8a3c" stroke-width=".6"/>
<g stroke="#4f8f3a" stroke-width=".8" fill="none"><path d="M669 249 690 279M739 258l86 74M741 255l-49 56M813 364l106 91M767 443l112 96M637 557l-30 36M608 590l33 28M916 453l-11 13M895 476l-3 5M911 497l-16 17M884 527l-8 9"/></g>
<path d="m690 279-5-5 4-1zM739 258l6 3-3 3zM825 332l-6-3 3-3zM917 452l-6 4 3 3zM911 496l-6 4 3 3zM876 537l3-6 3 3zM608 590l6 3-3 3zM626 605l-6-3 3-3z" fill="#4f8f3a"/>
<g fill="none" stroke="#000" stroke-width="1.300" stroke-dasharray="1.500 2"><path d="M636 261 914 498M868 320 800 402 626 607"/></g>
<g fill="none" stroke="#2424d8"><path d="M806 358 717 282Q700 273 690 279 679 289 684 307L748 427"/><g fill="#5b5bd8"><path d="M804 356h4v4h-4zM716 281h3v3h-3zM702 297h3v3h-3zM682 305h3v3h-3zM746 425h3v3h-3z"/></g></g>
<path d="m720 333 26 15-4 8z" fill="#d02020"/><path d="m734 345 10 6-2 5z" fill="#7a0e0e"/>
<path d="m861 329-20 16 4 8q5-3 7-6z" fill="#128a1c"/><path d="m829 370-13 9 4 4 5-1z" fill="#0a0aa0"/>
<g fill="#4f8f3a" font-size="8"><text x="656" y="240">R5</text><text x="766" y="289">H1</text><text x="893" y="476">V3</text><text x="883" y="523">V4</text><text x="642" y="626">H2</text></g>
<circle cx="681.500" cy="443" r="19.500" fill="#c6cf08"/>
<path d="M677 440q5-5 11-1M686 447q-4 4-9 1" fill="none" stroke="#111" stroke-width="2"/><path d="M674 436v7h7zM689 450v-7h-7z" fill="#111"/>
<path d="M684 624h233v9H684z" fill="#fff" stroke="#222"/><path d="M684 624h58v9h-58zM800 624h58v9h-58z" fill="#000"/>
<g font-size="8" fill="#111" text-anchor="middle"><text x="683" y="621">0.00</text><text x="799" y="621">50.00</text><text x="741" y="646">25.00</text><text x="858" y="646">75.00</text><text x="927" y="621">100.00 (mm)</text></g>
</svg>
<div class="logo3d"><span class="big">ANSYS</span><span class="yr">2019 <b>R2</b></span><span class="ac">ACADEMIC</span></div>
<svg class="triad" width="100" height="64" viewBox="1160 538 100 64"><path d="m1211 597-34-28" stroke="#137a1c" stroke-width="3"/><path d="m1169 561 14 4-8 10z" fill="#128a1c"/><circle cx="1221" cy="585" r="5" fill="#a01414"/><path d="m1210 597 25-29" stroke="#10109c" stroke-width="3"/><path d="m1242 559-4 14-8-8z" fill="#1414c8"/><circle cx="1212" cy="555" r="5.500" fill="#22b5b0"/><circle cx="1211" cy="553" r="2" fill="#7fe5e0"/><text x="1161" y="556" font-size="8" fill="#3a8a4a">Y</text><text x="1247" y="553" font-size="8" fill="#3a4ab0">Z</text></svg>
</div>
<div class="viewtabs d-flex"><button class="cur">Model View</button><button>Print Preview</button></div>
</section>
</main>

<footer class="flex-shrink-0">
<div class="statusbar d-flex"><div class="c1 d-flex align-items-center ps-2"><svg width="10" height="10" viewBox="0 0 10 10"><circle cx="5" cy="5" r="5" fill="#128a3c"/><path d="m2 5 2 2 4-4" fill="none" stroke="#fff" stroke-width="1.500"/></svg><span class="ps-2">Ready</span></div><div class="cell c2">No Selection</div><div class="cell c3">Millimeter&nbsp;&nbsp; Degree</div><div class="cell c4">0</div><div class="cell c5">0</div></div>
<div class="taskbar d-flex align-items-center">
<button class="sysb" aria-label="Start"><svg width="12" height="12" viewBox="0 0 12 12" fill="#fff"><path d="m0 2 5-1v5H0zM6 1l6-1v6H6zM0 7h5v5l-5-1zM6 7h6v6l-6-1z"/></svg></button>
<button class="sysb" aria-label="Search"><svg width="12" height="12" viewBox="0 0 12 12" fill="none" stroke="#fff"><circle cx="7" cy="4.500" r="4"/><path d="m4 7.500-4 4"/></svg></button>
<button class="sysb" aria-label="Task view"><svg width="12" height="12" viewBox="0 0 12 12" fill="none" stroke="#fff"><path d="M1 4h7v5H1zM1 0v2h7V0M1 12v-1h7v1M10.500 0v12M10 4h2"/></svg></button>
<div class="apps d-flex">
<button aria-label="Edge"><svg width="14" height="14" viewBox="0 0 14 14"><path d="M1 6Q2 0 7.500.5 13 1 13 8H5q0 4 4 4 2 0 4-1v2q-2 1-5 1-6 0-6-6 1-3 4-4-2 1-2 2h5q0-2-3-3-3 0-5 3z" fill="#1583dc"/></svg></button>
<button class="run" aria-label="File Explorer"><svg width="16" height="14" viewBox="0 0 16 14"><path d="M1 1h5l1 2h8v10H1z" fill="#f6d774"/><path d="M4 7h8v6h-2v-3H6v3H4z" fill="#3aa0d8"/></svg></button>
<button aria-label="Mahjong"><svg width="16" height="14" viewBox="0 0 16 14"><path d="M0 1h7v6H0zM8 1h7v6H8zM4 7h7v6H4z" fill="#e9e2e2" stroke="#888" stroke-width=".5"/><path d="M2 3h3v2H2zM10 3h3v2h-3zM6 9h3v2H6z" fill="#c33a4a"/></svg></button>
<button aria-label="Download manager"><svg width="16" height="16" viewBox="0 0 16 16"><circle cx="8" cy="9" r="6" fill="#1f87d0"/><circle cx="9" cy="8" r="3" fill="#6fd4e8"/><path d="M3 14q7-1 11-8l1 2q-4 7-11 7z" fill="#e8b040"/><path d="M1 1h8v2L6 7 5 4z" fill="#d02030"/></svg></button>
<button class="run" aria-label="Chrome"><svg width="15" height="15" viewBox="0 0 14 14"><circle cx="7" cy="7" r="7" fill="#f7c52c"/><path d="M7 7 1 3.500Q3 0 7 0t6 4H7z" fill="#dd4435"/><path d="M7 7 1 3.500Q-1 7 1 10.500T7 14l3-5z" fill="#2b9c50"/><circle cx="7" cy="7" r="3.300" fill="#fff"/><circle cx="7" cy="7" r="2.500" fill="#4284f3"/></svg></button>
<button aria-label="Device"><svg width="8" height="16" viewBox="0 0 8 16"><path d="M0 1h8v14H0z" fill="#8e9296"/><path d="M0 5h8v4H0z" fill="#44484c"/><path d="M1 2h6v2H1z" fill="#ccd"/></svg></button>
<button aria-label="Coc Coc"><svg width="16" height="16" viewBox="0 0 16 16"><circle cx="8" cy="8" r="7.500" fill="#58a83c"/><circle cx="7" cy="9" r="3" fill="none" stroke="#fff" stroke-width="2"/><path d="m9 5 2-4 4 3-4 3z" fill="#e9e6b0"/></svg></button>
<button aria-label="Visual Studio"><svg width="16" height="16" viewBox="0 0 16 16"><path d="M1 4v8l3-2V6z" fill="#5c2d91"/><path d="m1 4 2-1 9 9 3 2-3 2-9-8z" fill="#7a4ab8"/><path d="M1 12l2 1 9-9V0L3 9zM12 0l3 2v12l-3 2z" fill="#9a6cd4"/></svg></button>
<button class="run" aria-label="Recorder"><svg width="16" height="16" viewBox="0 0 16 16"><circle cx="8" cy="8" r="7" fill="#111" stroke="#fff"/><circle cx="8" cy="8" r="4.500" fill="#e02222"/></svg></button>
<button class="run" aria-label="Workbench"><svg width="16" height="16" viewBox="0 0 16 16"><path d="M0 0h16v16H0z" fill="#b4b4b4"/><path d="M1 16 5 1h6l4 15z" fill="#8c8c8c"/><text x="8" y="11" font-size="8" font-weight="700" fill="#fff" text-anchor="middle">WB</text></svg></button>
<button class="run" aria-label="Media"><svg width="16" height="16" viewBox="0 0 16 16"><circle cx="8" cy="8" r="7.500" fill="#3b8cc4"/><g fill="#08213a"><circle cx="8" cy="4" r="2"/><circle cx="4" cy="8" r="2"/><circle cx="12" cy="7" r="2"/><circle cx="6" cy="12" r="2"/><circle cx="11" cy="12" r="1.700"/></g></svg></button>
<button class="run" aria-label="Slack"><svg width="16" height="16" viewBox="0 0 16 16"><circle cx="8" cy="8" r="7.500" fill="#fff"/><g stroke-width="2" stroke-linecap="round"><path d="M6.500 4v3" stroke="#36c5f0"/><path d="M9.500 6.500H12" stroke="#2eb67d"/><path d="M9.500 9.500V12" stroke="#ecb22e"/><path d="M4 9.500h2.500" stroke="#e01e5a"/><path d="M9.500 4v1M4 6.500h1" stroke="#2eb67d"/><path d="M6.500 12v-.5M12 9.500h-.5" stroke="#e01e5a"/></g></svg></button>
<button class="run live" aria-label="DesignModeler"><svg width="16" height="16"><use href="#dm"/></svg></button>
</div>
<div class="ms-auto d-flex align-items-center">
<button class="tray" aria-label="Show hidden icons"><svg width="8" height="6" viewBox="0 0 8 6"><path d="m0 5 4-4 4 4" fill="none" stroke="#fff"/></svg></button>
<button class="tray" aria-label="Battery"><svg width="12" height="8" viewBox="0 0 12 8" fill="none" stroke="#ddd"><path d="M4 2h7v4H4M2 0v3M0 1h3v2H0M2 4v3M6 3l3 2M9 3 6 5" stroke-width=".9"/></svg></button>
<button class="tray" aria-label="Network"><svg width="10" height="10" viewBox="0 0 10 10" fill="none" stroke="#ccc"><path d="M1 9Q1 2 9 1M3 9q0-4 6-5M6 9q0-2 3-2"/></svg></button>
<button class="tray" aria-label="Volume"><svg width="11" height="9" viewBox="0 0 11 9" fill="none" stroke="#ddd"><path d="M0 3h2l3-2v7L2 6H0zM7 3q1 2 0 3M9 1q2 3 0 7"/></svg></button>
<span class="ps-1 pe-1">ENG</span>
<div class="text-center text-nowrap pe-1">10:57 PM<br>12/21/2019</div>
<button class="sysb" aria-label="Notifications"><svg width="18" height="18" viewBox="0 0 18 18"><path d="M1 2h12v9H6l-3 3v-3H1z" fill="#fff"/><path d="M3 4h8M3 6h8M3 8h5" stroke="#222"/><circle cx="12" cy="12" r="5" fill="#3c4046" stroke="#999" stroke-width=".7"/><text x="12" y="15" font-size="8" fill="#fff" text-anchor="middle">8</text></svg></button>
</div></div>
</footer>
<script src="https://cdn.jsdelivr.net/npm/bootstrap@5.3.0/dist/js/bootstrap.bundle.min.js"></script>
</body>
</html>
